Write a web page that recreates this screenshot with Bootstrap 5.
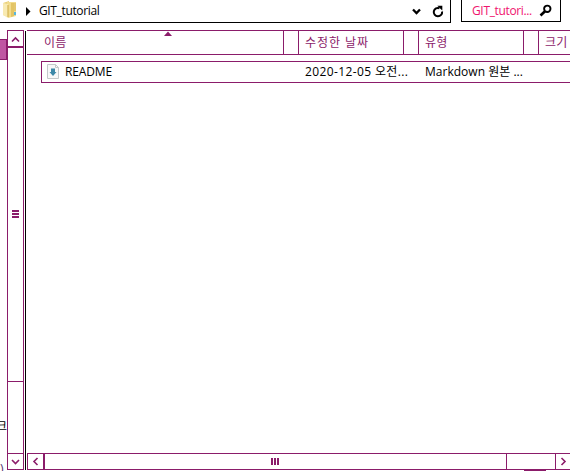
<!DOCTYPE html>
<html lang="ko">
<head>
<meta charset="utf-8">
<title>GIT_tutorial</title>
<link href="https://cdn.jsdelivr.net/npm/bootstrap@5.3.0/dist/css/bootstrap.min.css" rel="stylesheet">
<style>
:root{--plum:#8b1c6a}
body{width:570px;height:471px;background:#fff;color:#000;font:12px/18px "Open Sans","Noto Sans CJK KR",sans-serif}
svg{display:block;flex:none}
.top-strip{height:30px}
.address{width:451px;height:23px;border:solid #000;border-width:0 1px 1px 0;padding-left:2px}
.crumb{padding:2px 0 0 2px;letter-spacing:-.36px}
.search-box{width:100px;height:22px;margin-left:10px;border:solid #000;border-width:0 1px 1px;padding-left:10px;color:#f0146e}
.query{padding-top:2px;letter-spacing:-.35px}
.nav-edge{width:7px}
.nav-sel{height:21px;margin-top:9px;background:#bf55a2;border:1px solid var(--plum);border-left:0}
.nav-letter{margin-top:358px;height:18px}
.nav-tail{margin-top:24px;height:12px;color:#51306a}
.vbar{width:17px;height:440px;border:1px solid var(--plum)}
.vup{height:17px;border-bottom:2px solid var(--plum)}
.vthumb{height:334px;padding-bottom:2px;border-bottom:1px solid var(--plum)}
.vdown{height:16px;border-top:1px solid var(--plum)}
.divider{width:1px;height:439px;margin:1px 1px 0;background:#000}
.list-pane{width:543px;height:441px}
.heads{height:25px;border:solid var(--plum);border-width:1px 0;color:var(--plum)}
.hcell{border-right:1px solid var(--plum);padding:3px 0 0 6px;white-space:nowrap;flex:none;letter-spacing:.3px}
.h-name{width:257px;padding-left:17px}
.h-mid{width:105px}
.h-date{letter-spacing:.95px}
.sort-mark{margin:-3px 111px 0 0}
.hgap{width:15px;border-right:1px solid var(--plum);flex:none}
.file-row{height:22px;margin:6px 0 0 14px;padding-top:1px;border:1px solid var(--plum);border-right:0;white-space:nowrap}
.c-name{width:240px;letter-spacing:-.15px}
.c-date{width:120px;letter-spacing:.38px}
.c-type{letter-spacing:.02px}
.hbar{height:17px;border:1px solid var(--plum);border-right:0}
.hleft{width:17px;border-right:2px solid var(--plum)}
.hthumb{width:462px;padding-right:2px;border-right:1px solid var(--plum)}
.hright{width:15px;border-left:1px solid var(--plum)}
.stub{width:22px;height:1px;margin-left:497px;background:var(--plum)}
</style>
<script src="https://cdn.jsdelivr.net/npm/bootstrap@5.3.0/dist/js/bootstrap.bundle.min.js"></script>
</head>
<body class="overflow-hidden">
<div class="top-strip d-flex">
  <div class="address d-flex">
    <svg width="17" height="20" viewBox="0 0 17 20"><path d="M1 3l6-2v16l-6-2z" fill="#e9cf78"/><path d="M5 2h9v14l-8 2z" fill="#f2dc8d"/><path d="M1 3l5 1v14l-5-3z" fill="#f8eab2"/><path d="M6 5v12" stroke="#cda943"/><path d="M9 3h3v13l-3 1z" fill="#e3c465"/><path d="M12 12h2v3h-2z" fill="#58b5dc"/><path d="M13 3v8" stroke="#d4b252"/></svg>
    <svg width="18" height="22" viewBox="0 0 18 22"><path d="M7 7l4.500 4.500L7 16z"/></svg>
    <span class="crumb flex-grow-1">GIT_tutorial</span>
    <svg width="40" height="22" viewBox="0 0 40 22" fill="none" stroke="#000"><path d="M3 9.5l3.500 3.500L10 9.500" stroke-width="2.300"/><path d="M29.500 8.200a4.200 4.200 0 1 0 2.600 3.300" stroke-width="2"/><path d="M27.300 5.800h5v4.700z" fill="#000" stroke="none"/></svg>
  </div>
  <div class="search-box d-flex">
    <span class="query flex-grow-1">GIT_tutori...</span>
    <svg width="22" height="21" viewBox="0 0 22 21" fill="none" stroke="#000"><circle cx="9.300" cy="8.800" r="3.200" stroke-width="1.900"/><path d="M7 11.200l-4.500 4.300" stroke-width="2.600"/></svg>
  </div>
</div>
<div class="d-flex">
  <div class="nav-edge overflow-hidden"><div class="nav-sel"></div><div class="nav-letter d-flex justify-content-end">크</div><div class="nav-tail d-flex">)</div></div>
  <div class="vbar d-flex flex-column">
    <div class="vup"><svg width="15" height="15" viewBox="0 0 15 15" fill="none" stroke="#8b1c6a" stroke-width="1.600"><path d="M4 10.500L7.500 7l3.500 3.500"/></svg></div>
    <div class="vthumb d-flex align-items-center justify-content-center"><svg width="7" height="8" viewBox="0 0 7 8" fill="#8b1c6a"><path d="M0 0h7v2H0zM0 3h7v2H0zM0 6h7v2H0z"/></svg></div>
    <div class="flex-grow-1"></div>
    <div class="vdown"><svg width="15" height="15" viewBox="0 0 15 15" fill="none" stroke="#8b1c6a" stroke-width="1.600"><path d="M4 6l3.500 3.500L11 6"/></svg></div>
  </div>
  <div class="divider ms-auto"></div>
  <div class="list-pane d-flex flex-column overflow-hidden">
    <div class="heads d-flex">
      <div class="hcell h-name d-flex"><span>이름</span><svg class="sort-mark ms-auto" width="8" height="5" viewBox="0 0 8 5"><path d="M0 5L4 .500l4 4.500z" fill="#8b1c6a"/></svg></div>
      <div class="hgap"></div>
      <div class="hcell h-mid h-date">수정한 날짜</div>
      <div class="hgap"></div>
      <div class="hcell h-mid">유형</div>
      <div class="hgap"></div>
      <div class="hcell border-0">크기</div>
    </div>
    <div class="file-row d-flex">
      <svg width="23" height="19" viewBox="0 1 23 19"><path d="M5.500 2.500h8l3 3v11h-11z" fill="#f7f8f8" stroke="#c4c8ca"/><path d="M13.500 2.500v3h3" fill="none" stroke="#c4c8ca"/><path d="M9 6.500h4v3.500h1.500L11 14 7.500 10H9z" fill="#3c88a8"/></svg>
      <span class="c-name">README</span>
      <span class="c-date">2020-12-05 오전...</span>
      <span class="c-type">Markdown 원본 ...</span>
    </div>
    <div class="flex-grow-1"></div>
    <div class="hbar d-flex">
      <div class="hleft"><svg width="15" height="15" viewBox="0 0 15 15" fill="none" stroke="#8b1c6a" stroke-width="1.600"><path d="M9.500 4L6 7.500 9.500 11"/></svg></div>
      <div class="hthumb d-flex align-items-center justify-content-center"><svg width="8" height="7" viewBox="0 0 8 7" fill="#8b1c6a"><path d="M0 0h2v7H0zM3 0h2v7H3zM6 0h2v7H6z"/></svg></div>
      <div class="flex-grow-1"></div>
      <div class="hright"><svg width="14" height="15" viewBox="0 0 14 15" fill="none" stroke="#8b1c6a" stroke-width="1.600"><path d="M5.500 4L9 7.500 5.500 11"/></svg></div>
    </div>
    <div class="stub"></div>
  </div>
</div>
</body>
</html>
